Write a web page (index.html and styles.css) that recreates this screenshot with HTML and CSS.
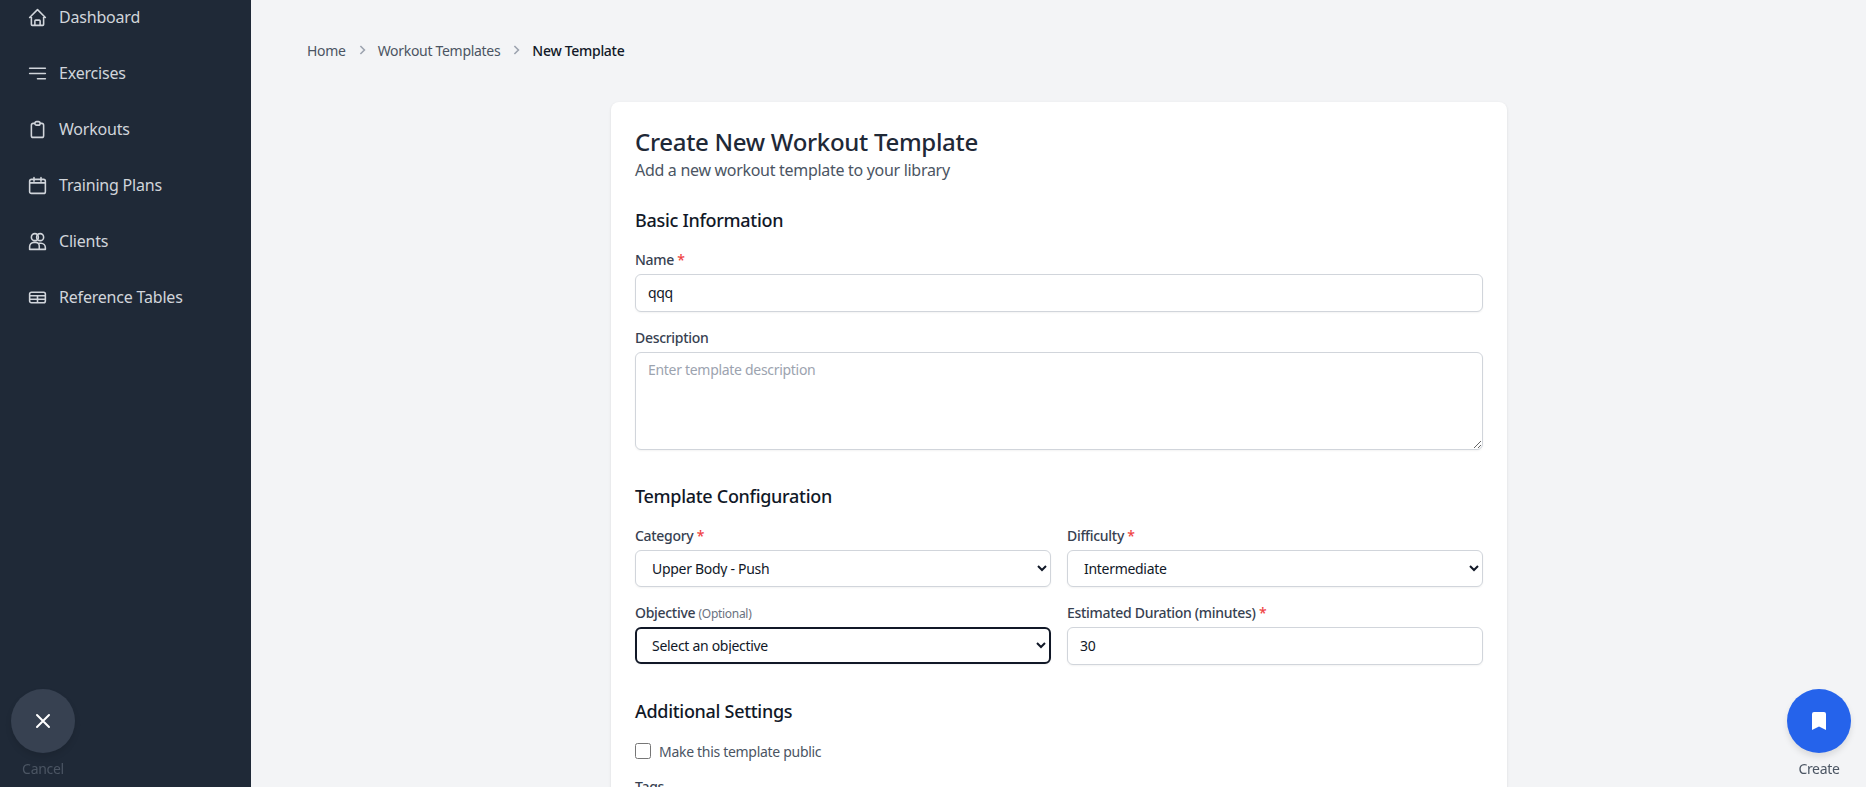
FILE: index.html
```html
<!DOCTYPE html>
<html lang="en">
<head>
    <meta charset="UTF-8">
    <meta name="viewport" content="width=device-width, initial-scale=1.0">
    <title>New Template</title>
    <link rel="stylesheet" href="styles.css">
</head>
<body>
    <aside class="sidebar">
        <nav class="nav">
            <a class="nav-item" href="#">
                <svg class="nav-icon" viewBox="0 0 24 24"><path d="M3 12l9-9 9 9M5 10v10a1 1 0 001 1h3m10-11v10a1 1 0 01-1 1h-3m-6 0v-5a1 1 0 011-1h4a1 1 0 011 1v5m-6 0h6"/></svg>
                Dashboard
            </a>
            <a class="nav-item" href="#">
                <svg class="nav-icon" viewBox="0 0 24 24"><path d="M3 6h18M3 12h18M12 18h9"/></svg>
                Exercises
            </a>
            <a class="nav-item" href="#">
                <svg class="nav-icon" viewBox="0 0 24 24"><path d="M9 5H7a2 2 0 00-2 2v12a2 2 0 002 2h10a2 2 0 002-2V7a2 2 0 00-2-2h-2M9 5a2 2 0 002 2h2a2 2 0 002-2M9 5a2 2 0 012-2h2a2 2 0 012 2"/></svg>
                Workouts
            </a>
            <a class="nav-item" href="#">
                <svg class="nav-icon" viewBox="0 0 24 24"><path d="M8 3v4M16 3v4M3 9h18M5 5h14a2 2 0 012 2v12a2 2 0 01-2 2H5a2 2 0 01-2-2V7a2 2 0 012-2z"/></svg>
                Training Plans
            </a>
            <a class="nav-item" href="#">
                <svg class="nav-icon" viewBox="0 0 24 24"><circle cx="9" cy="7" r="4"/><circle cx="15" cy="7" r="4"/><path d="M3 21v-3a5 5 0 015-5h2a4 4 0 014 4v4zM14 14h2a5 5 0 015 5v2h-7"/></svg>
                Clients
            </a>
            <a class="nav-item" href="#">
                <svg class="nav-icon" viewBox="0 0 24 24"><path d="M5 6h14a2 2 0 012 2v8a2 2 0 01-2 2H5a2 2 0 01-2-2V8a2 2 0 012-2zM3 10h18M3 14h18M12 10v8"/></svg>
                Reference Tables
            </a>
        </nav>
    </aside>

    <main class="main">
        <div class="breadcrumb">
            <a href="#">Home</a>
            <svg class="crumb-sep" viewBox="0 0 20 20"><path d="M8 5l5 5-5 5"/></svg>
            <a href="#">Workout Templates</a>
            <svg class="crumb-sep" viewBox="0 0 20 20"><path d="M8 5l5 5-5 5"/></svg>
            <span class="crumb-current">New Template</span>
        </div>

        <form class="card">
            <h1>Create New Workout Template</h1>
            <p class="subtitle">Add a new workout template to your library</p>

            <section class="section">
                <h2>Basic Information</h2>
                <div class="field">
                    <label for="name">Name <span class="req">*</span></label>
                    <input type="text" id="name" value="qqq">
                </div>
                <div class="field">
                    <label for="description">Description</label>
                    <textarea id="description" placeholder="Enter template description"></textarea>
                </div>
            </section>

            <section class="section">
                <h2>Template Configuration</h2>
                <div class="grid">
                    <div class="field">
                        <label for="category">Category <span class="req">*</span></label>
                        <select id="category"><option>Upper Body - Push</option></select>
                    </div>
                    <div class="field">
                        <label for="difficulty">Difficulty <span class="req">*</span></label>
                        <select id="difficulty"><option>Intermediate</option></select>
                    </div>
                    <div class="field">
                        <label for="objective">Objective <small>(Optional)</small></label>
                        <select id="objective" class="focused"><option>Select an objective</option></select>
                    </div>
                    <div class="field">
                        <label for="duration">Estimated Duration (minutes) <span class="req">*</span></label>
                        <input type="number" id="duration" value="30">
                    </div>
                </div>
            </section>

            <section class="section">
                <h2>Additional Settings</h2>
                <label class="check"><input type="checkbox"> Make this template public</label>
                <div class="field">
                    <label for="tags">Tags</label>
                    <input type="text" id="tags">
                </div>
            </section>
        </form>
    </main>

    <div class="fab fab-cancel">
        <button type="button" class="fab-btn">
            <svg viewBox="0 0 24 24"><path d="M6 6l12 12M18 6L6 18"/></svg>
        </button>
        <span>Cancel</span>
    </div>
    <div class="fab fab-create">
        <button type="button" class="fab-btn">
            <svg viewBox="0 0 24 24"><path class="solid" d="M5 5a2 2 0 012-2h10a2 2 0 012 2v16l-7-3.5L5 21V5z"/></svg>
        </button>
        <span>Create</span>
    </div>
</body>
</html>
```

FILE: styles.css
```css
* {
    box-sizing: border-box;
}

html, body {
    height: 787px;
    overflow: hidden;
}

body {
    margin: 0;
    display: flex;
    background-color: #f3f4f6;
    color: #1f2937;
    font-family: "Noto Sans", sans-serif;
    letter-spacing: -0.3px;
}

a {
    text-decoration: none;
}

.sidebar {
    width: 251px;
    flex-shrink: 0;
    background-color: #1f2937;
}

.nav {
    margin-top: -11px;
    padding: 0 16px;
}

.nav-item {
    display: flex;
    align-items: center;
    gap: 11px;
    height: 56px;
    padding-left: 11px;
    color: #d1d5db;
    font-size: 16px;
    letter-spacing: -0.2px;
}

.nav-icon {
    width: 21px;
    height: 21px;
    fill: none;
    stroke: #d1d5db;
    stroke-width: 1.8;
    stroke-linecap: round;
    stroke-linejoin: round;
}

.main {
    flex: 1;
    padding: 39px 56px 0;
}

.breadcrumb {
    display: flex;
    align-items: center;
    gap: 8px;
    height: 22px;
    font-size: 14px;
}

.breadcrumb a {
    color: #4b5563;
}

.crumb-sep {
    width: 16px;
    height: 16px;
    fill: none;
    stroke: #9ca3af;
    stroke-width: 2;
}

.crumb-current {
    color: #111827;
    font-weight: 500;
}

.card {
    width: 896px;
    margin: 41px 0 0 304px;
    padding: 24px;
    background-color: #fff;
    border-radius: 8px;
    box-shadow: 0 1px 3px rgba(0, 0, 0, 0.1);
}

h1 {
    margin: 0;
    font-size: 24px;
    line-height: 32px;
    font-weight: 500;
}

.subtitle {
    margin: 0;
    font-size: 16px;
    line-height: 24px;
    color: #4b5563;
}

.section {
    margin-top: 24px;
}

.section + .section {
    margin-top: 32px;
}

h2 {
    margin: 0 0 16px;
    font-size: 18px;
    line-height: 28px;
    font-weight: 500;
    color: #111827;
}

.field {
    margin-bottom: 16px;
}

.field label {
    display: block;
    height: 20px;
    margin-bottom: 4px;
    font-size: 14px;
    line-height: 20px;
    font-weight: 500;
    color: #374151;
}

.req {
    color: #ef4444;
}

small {
    font-size: 12px;
    font-weight: 400;
    color: #6b7280;
}

input[type="text"], input[type="number"], textarea, select {
    display: block;
    width: 100%;
    height: 38px;
    padding: 7px 12px 9px;
    border: 1px solid #d1d5db;
    border-radius: 6px;
    background-color: #fff;
    color: #111827;
    font-family: inherit;
    font-size: 14px;
    letter-spacing: -0.3px;
    box-shadow: 0 1px 2px rgba(0, 0, 0, 0.05);
}

select {
    height: 37px;
}

textarea {
    height: 98px;
}

textarea::placeholder {
    color: #9ca3af;
}

select.focused {
    border: 2px solid #111827;
    padding: 6px 11px 8px;
}

.grid {
    display: grid;
    grid-template-columns: 1fr 1fr;
    column-gap: 16px;
}

.grid .field:nth-last-child(-n+2) {
    margin-bottom: 0;
}

.check {
    display: flex;
    align-items: center;
    gap: 8px;
    height: 20px;
    margin-bottom: 16px;
    font-size: 14px;
    color: #4b5563;
}

.check input {
    width: 16px;
    height: 16px;
    margin: 0;
}

.fab {
    position: fixed;
    bottom: 8px;
    width: 64px;
    display: flex;
    flex-direction: column;
    align-items: center;
    gap: 6px;
    font-size: 14px;
    line-height: 20px;
}

.fab-cancel {
    left: 11px;
    color: #4b5563;
}

.fab-create {
    right: 15px;
    color: #4b5563;
}

.fab-btn {
    width: 64px;
    height: 64px;
    display: flex;
    align-items: center;
    justify-content: center;
    padding: 0;
    border: 0;
    border-radius: 50%;
    box-shadow: 0 4px 6px rgba(0, 0, 0, 0.1);
}

.fab-cancel .fab-btn {
    background-color: #374151;
}

.fab-create .fab-btn {
    background-color: #2563eb;
}

.fab-btn svg {
    width: 24px;
    height: 24px;
    fill: none;
    stroke: #fff;
    stroke-width: 2;
    stroke-linecap: round;
}

.fab-btn .solid {
    fill: #fff;
    stroke: none;
}
```
